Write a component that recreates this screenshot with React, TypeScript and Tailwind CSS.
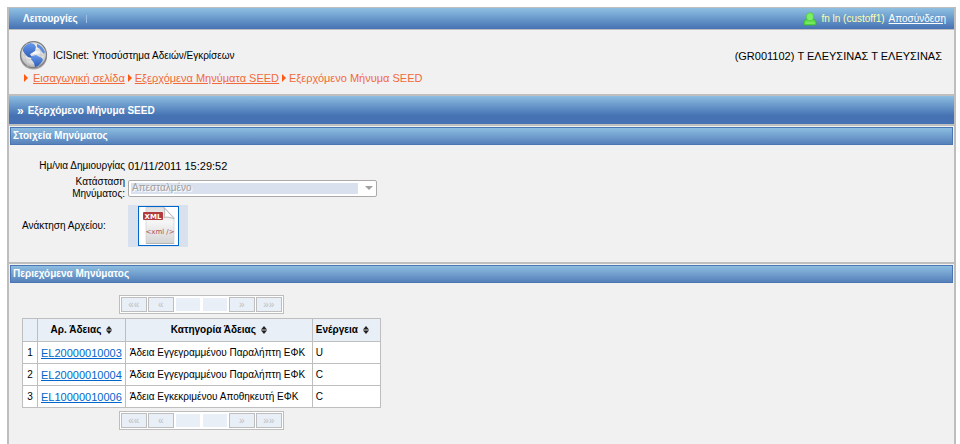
import React, { useState } from 'react';

interface License {
  id: string;
  category: string;
  action: string;
}

const licenses: License[] = [
  { id: 'EL20000010003', category: 'Άδεια Εγγεγραμμένου Παραλήπτη ΕΦΚ', action: 'U' },
  { id: 'EL20000010004', category: 'Άδεια Εγγεγραμμένου Παραλήπτη ΕΦΚ', action: 'C' },
  { id: 'EL10000010006', category: 'Άδεια Εγκεκριμένου Αποθηκευτή ΕΦΚ', action: 'C' }
];

const GlobeLogo: React.FC = () => (
  <svg width="30" height="30" viewBox="0 0 30 30" aria-hidden="true">
    <defs>
      <radialGradient id="globe" cx="0.5" cy="0.4" r="0.6">
        <stop offset="0" stopColor="#ffffff" />
        <stop offset="0.7" stopColor="#dadada" />
        <stop offset="1" stopColor="#a8a8a8" />
      </radialGradient>
      <linearGradient id="land" x1="0" y1="0" x2="0" y2="1">
        <stop offset="0" stopColor="#6a9aec" />
        <stop offset="1" stopColor="#2a5cb8" />
      </linearGradient>
    </defs>
    <ellipse cx="14.500" cy="15.500" rx="13.500" ry="13" fill="#a8a8a8" />
    <circle cx="14.500" cy="13.700" r="13" fill="url(#globe)" stroke="#7b7d80" strokeWidth="1.2" />
    <path d="M2.500 9h24M2 14h25M3.500 19h22M8 2c-3 7-3 16 1 24M19 2c4 7 4 16 0 24" stroke="#bfc1c4" strokeWidth="0.7" fill="none" />
    <path d="M4 8c2-4 5-5.500 8-6l3 1 2 3-1 4-3 2-2 1 1 2 2 1-1 1-4-1-3-3-2-3z" fill="url(#land)" />
    <path d="M13 15l4-1 6 3 1 2-2 3-3 3-3 1-1-4-3-4z" fill="url(#land)" />
    <path d="M18 3c4 1.500 6.500 4 8 8l-1 2-2-2-2-3-3-2z" fill="#5c8de0" />
  </svg>
);

const UserIcon: React.FC = () => (
  <svg width="14" height="14" viewBox="0 0 14 14" aria-hidden="true">
    <path d="M1 13V10C1 8.500 2.500 7.500 4 7.500h6C11.500 7.500 13 8.500 13 10V13z" fill="#5fe04a" stroke="#35b52c" strokeWidth="0.8" />
    <rect x="3.500" y="0.800" width="7" height="8" rx="3.200" fill="#7bf065" stroke="#4cc93f" strokeWidth="0.8" />
    <path d="M2.500 11h9" stroke="#8ff07e" strokeWidth="1" />
  </svg>
);

const XmlIcon: React.FC = () => (
  <svg width="39" height="38" viewBox="0 0 39 38" aria-hidden="true">
    <defs>
      <linearGradient id="sheet" x1="0" y1="0" x2="0" y2="1">
        <stop offset="0" stopColor="#e0e0e0" />
        <stop offset="0.4" stopColor="#f6f6f6" />
        <stop offset="1" stopColor="#d4d4d4" />
      </linearGradient>
    </defs>
    <path d="M7 0.500h18l10 10v26H7z" fill="url(#sheet)" stroke="#cfcfcf" strokeWidth="0.7" />
    <path d="M25 0.500c1 4 1 7 0 10 3-1 6 0 10 1z" fill="#ffffff" stroke="#a9a9a9" strokeWidth="0.8" />
    <path d="M7 36.500h28" stroke="#b5b5b5" />
    <rect x="4" y="5" width="20" height="8" rx="1" fill="#b23a3e" />
    <text x="14" y="12" textAnchor="middle" fontSize="7" fontWeight="bold" fill="#ffffff" fontFamily="DejaVu Sans, sans-serif">XML</text>
    <text x="21" y="27" textAnchor="middle" fontSize="7" fill="#b0504f" fontFamily="DejaVu Sans, sans-serif">&lt;xml /&gt;</text>
  </svg>
);

const SortIcon: React.FC = () => (
  <svg className="ml-0.5 inline-block" width="6" height="8" viewBox="0 0 6 8" aria-hidden="true">
    <path d="M3 0l3 3.500H0zM3 8L0 4.500h6z" fill="#222222" />
    <path d="M0.500 3h5v2h-5z" fill="#777777" />
  </svg>
);

const Arrow: React.FC = () => (
  <svg className="shrink-0" width="4" height="8" viewBox="0 0 4 8" aria-hidden="true">
    <path d="M0 0l4 4-4 4z" fill="#ff5a10" />
  </svg>
);

const Pager: React.FC<{ label: string }> = ({ label }) => {
  const button = 'h-[15px] w-[26px] border border-[#bebebe] bg-[#e8eff7] leading-3 text-[#bebebe]';

  return (
    <nav aria-label={label} className="mx-auto flex w-fit gap-px border border-[#bebebe] bg-white p-px">
      <button disabled className={button}>««</button>
      <button disabled className={button}>«</button>
      <span className="m-px w-6 bg-[#e8eff7]" />
      <span className="m-px w-6 bg-[#e8eff7]" />
      <button disabled className={button}>»</button>
      <button disabled className={button}>»»</button>
    </nav>
  );
};

const Panel: React.FC<{ title: string; children: React.ReactNode }> = ({ title, children }) => (
  <section className="border-b-2 border-[#bebebe] pt-px">
    <h2 className="mx-px h-[18px] border border-[#4a76b4] bg-linear-to-b from-[#8dbde0] to-[#5681bb] px-0.5 leading-4 font-bold text-white">
      {title}
    </h2>
    {children}
  </section>
);

const App: React.FC = () => {
  const [status, setStatus] = useState('sent');

  return (
    <div className="bg-white pt-[7px] pr-1 pl-[7px] font-['Liberation_Sans',Arial,sans-serif] text-[10px] leading-3 text-black">
      <div className="border-x-2 border-t border-[#bebebe] bg-[#f1f1f1]">
        <div className="flex h-[22px] items-center justify-between border-b border-[#bebebe] bg-linear-to-b from-[#8fc0e2] to-[#4672b3] pr-2 pl-3.5 text-white">
          <button className="border-r border-[#9fc0e6] pr-2 leading-2 font-bold">Λειτουργίες</button>
          <div className="flex items-center gap-1">
            <UserIcon />
            <span className="text-[#ffffb0]">fn ln (custoff1)</span>
            <a href="#logout" className="underline">Αποσύνδεση</a>
          </div>
        </div>

        <header className="flex items-start justify-between border-b-2 border-[#bebebe] pt-[11px] pr-3 pb-2.5 pl-2.5">
          <div>
            <div className="flex items-center gap-1">
              <GlobeLogo />
              <h1>ICISnet: Υποσύστημα Αδειών/Εγκρίσεων</h1>
            </div>
            <nav className="flex items-center gap-[3px] pt-px pl-[5px] text-[11px] text-[#f26a3a]">
              <Arrow />
              <a href="#home" className="ml-0.5 underline">Εισαγωγική σελίδα</a>
              <Arrow />
              <a href="#outgoing" className="underline">Εξερχόμενα Μηνύματα SEED</a>
              <Arrow />
              <span>Εξερχόμενο Μήνυμα SEED</span>
            </nav>
          </div>
          <p className="pt-[9px] text-[11px]">(GR001102) Τ ΕΛΕΥΣΙΝΑΣ Τ ΕΛΕΥΣΙΝΑΣ</p>
        </header>

        <div className="flex h-[30px] items-center gap-1 border-b-2 border-[#bebebe] bg-linear-to-b from-[#8dbde0] to-[#4672b3] to-70% px-2 pt-0.5 font-bold text-white">
          <span className="text-xs leading-3">»</span>
          <h2>Εξερχόμενο Μήνυμα SEED</h2>
        </div>

        <Panel title="Στοιχεία Μηνύματος">
          <div className="grid grid-cols-[103px_1fr] items-center gap-x-[3px] pt-[9px] pb-[15px] pl-[13px]">
            <span className="pt-1.5 pb-1 text-right">Ημ/νια Δημιουργίας</span>
            <span className="pt-0.5 text-[11px]">01/11/2011 15:29:52</span>

            <label htmlFor="status" className="pl-10 text-right">Κατάσταση Μηνύματος:</label>
            <select
              id="status"
              disabled
              value={status}
              onChange={e => setStatus(e.target.value)}
              className="h-[17px] w-[249px] appearance-none rounded-xs border border-[#aaaaaa] bg-white bg-[linear-gradient(#d9e1ef,#d9e1ef)] bg-[length:227px_11px] bg-[position:2px_2px] bg-no-repeat px-[3px] text-[10px] leading-3 text-[#a0a0a0] opacity-100 [grid-column:2] [grid-row:2] text-shadow-[1px_1px_0_#ffffff]"
            >
              <option value="sent">Απεσταλμένο</option>
            </select>
            <svg className="pointer-events-none ml-[237px] [grid-column:2] [grid-row:2]" width="8" height="4" viewBox="0 0 8 4" aria-hidden="true">
              <path d="M0 0h8L4 4z" fill="#a0a0a0" />
            </svg>

            <span className="mt-[5px]">Ανάκτηση Αρχείου:</span>
            <div className="mt-[5px] flex w-[60px] justify-center bg-[#d9e1ef] py-px">
              <button aria-label="XML" className="border border-[#0066cc] bg-white">
                <XmlIcon />
              </button>
            </div>
          </div>
        </Panel>

        <Panel title="Περιεχόμενα Μηνύματος">
          <div className="w-fit pt-3 pb-3.5 pl-[13px]">
            <Pager label="Πάνω" />
            <table className="mt-1 mb-[3px] border-collapse bg-white">
              <thead>
                <tr className="h-[23px] bg-[#e8eff7]">
                  <th className="w-[15px] border-x border-t border-[#bebebe]" />
                  <th className="border-x border-t border-[#bebebe] px-1">Αρ. Άδειας <SortIcon /></th>
                  <th className="w-[187px] border-x border-t border-[#bebebe] px-1">Κατηγορία Άδειας <SortIcon /></th>
                  <th className="w-[68px] border-x border-t border-[#bebebe] px-[3px] text-left">Ενέργεια <SortIcon /></th>
                </tr>
              </thead>
              <tbody>
                {licenses.map((license, index) => (
                  <tr key={license.id} className="h-[22px]">
                    <td className="border border-[#bebebe] text-center">{index + 1}</td>
                    <td className="border border-[#bebebe] px-[3px] text-[11px]">
                      <a href={`#${license.id}`} className="text-[#0066cc] underline">{license.id}</a>
                    </td>
                    <td className="border border-[#bebebe] px-1">{license.category}</td>
                    <td className="border border-[#bebebe] px-[3px]">{license.action}</td>
                  </tr>
                ))}
              </tbody>
            </table>
            <Pager label="Κάτω" />
          </div>
        </Panel>
      </div>
    </div>
  );
};

export default App;
